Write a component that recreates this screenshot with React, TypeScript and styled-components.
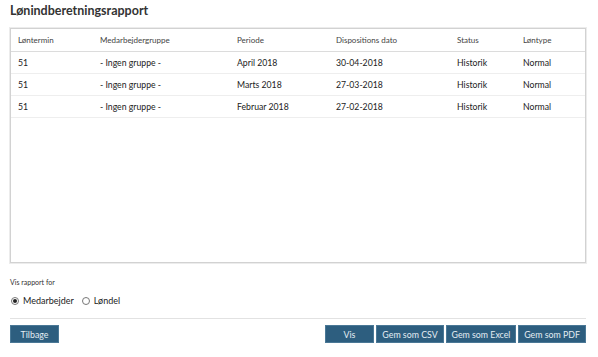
import React, { useState } from 'react';
import styled, { createGlobalStyle } from 'styled-components';

const GlobalStyle = createGlobalStyle`
  body {
    margin: 0;
    background: #fff;
    font-family: Lato, "Liberation Sans", sans-serif;
    color: #333;
  }
`;

const Page = styled.div`
  width: 598px;
  height: 357px;
  padding: 3px 12px 0 10px;
  box-sizing: border-box;
  display: flex;
  flex-direction: column;
`;

const Title = styled.h1`
  margin: 0;
  font-size: 12.5px;
  line-height: 16px;
  font-weight: 700;
  color: #333;
`;

const TableBox = styled.div`
  margin-top: 9px;
  height: 235px;
  border: 1px solid #d2d2d2;
  box-shadow: 0 0 0 1px #ececec;
  box-sizing: border-box;
`;

const Row = styled.div<{ head?: boolean }>`
  display: grid;
  grid-template-columns: 82px 137px 99px 121px 66px 1fr;
  align-items: center;
  padding-left: 7px;
  height: ${(p) => (p.head ? '22px' : '21px')};
  border-bottom: 1px solid ${(p) => (p.head ? '#dcdcdc' : '#eeeeee')};
  font-size: ${(p) => (p.head ? '8px' : '8.7px')};
  color: ${(p) => (p.head ? '#444' : '#222')};
`;

const Label = styled.div`
  margin-top: 15px;
  font-size: 7px;
  color: #333;
`;

const RadioRow = styled.div`
  display: flex;
  align-items: center;
  gap: 4px;
  margin-top: 9px;
  font-size: 9px;
  color: #222;
`;

const RadioOption = styled.label`
  display: flex;
  align-items: center;
  gap: 4px;
  margin-right: 3px;
  cursor: pointer;
`;

const Dot = styled.span<{ on: boolean }>`
  width: 8px;
  height: 8px;
  border-radius: 50%;
  border: 1px solid #777;
  box-sizing: border-box;
  background: #fff;
  margin-left: 1px;
  display: flex;
  align-items: center;
  justify-content: center;
  &::after {
    content: '';
    width: 4px;
    height: 4px;
    border-radius: 50%;
    background: ${(p) => (p.on ? '#222' : 'transparent')};
  }
`;

const Divider = styled.hr`
  margin: 12px 0 0;
  border: 0;
  border-top: 1px solid #e2e2e2;
`;

const Toolbar = styled.div`
  display: flex;
  justify-content: space-between;
  margin-top: 6px;
`;

const Group = styled.div`
  display: flex;
  gap: 2px;
`;

const Button = styled.button<{ w: number }>`
  width: ${(p) => p.w}px;
  height: 18px;
  padding: 0;
  border: 1px solid #4a7896;
  background: #2d5e7f;
  color: #e4edf3;
  font-family: Lato, "Liberation Sans", sans-serif;
  font-size: 8.8px;
  cursor: pointer;
`;

const rows = [
  ['51', '- Ingen gruppe -', 'April 2018', '30-04-2018', 'Historik', 'Normal'],
  ['51', '- Ingen gruppe -', 'Marts 2018', '27-03-2018', 'Historik', 'Normal'],
  ['51', '- Ingen gruppe -', 'Februar 2018', '27-02-2018', 'Historik', 'Normal'],
];

const heads = ['Løntermin', 'Medarbejdergruppe', 'Periode', 'Dispositions dato', 'Status', 'Løntype'];

export default function App() {
  const [target, setTarget] = useState('medarbejder');

  return (
    <Page>
      <GlobalStyle />
      <Title>Lønindberetningsrapport</Title>
      <TableBox>
        <Row head>
          {heads.map((h) => (
            <div key={h}>{h}</div>
          ))}
        </Row>
        {rows.map((r, i) => (
          <Row key={i}>
            {r.map((c, j) => (
              <div key={j}>{c}</div>
            ))}
          </Row>
        ))}
      </TableBox>
      <Label>Vis rapport for</Label>
      <RadioRow>
        <RadioOption onClick={() => setTarget('medarbejder')}>
          <Dot on={target === 'medarbejder'} />
          Medarbejder
        </RadioOption>
        <RadioOption onClick={() => setTarget('loendel')}>
          <Dot on={target === 'loendel'} />
          Løndel
        </RadioOption>
      </RadioRow>
      <Divider />
      <Toolbar>
        <Button w={49}>Tilbage</Button>
        <Group>
          <Button w={49}>Vis</Button>
          <Button w={68}>Gem som CSV</Button>
          <Button w={70}>Gem som Excel</Button>
          <Button w={68}>Gem som PDF</Button>
        </Group>
      </Toolbar>
    </Page>
  );
}
